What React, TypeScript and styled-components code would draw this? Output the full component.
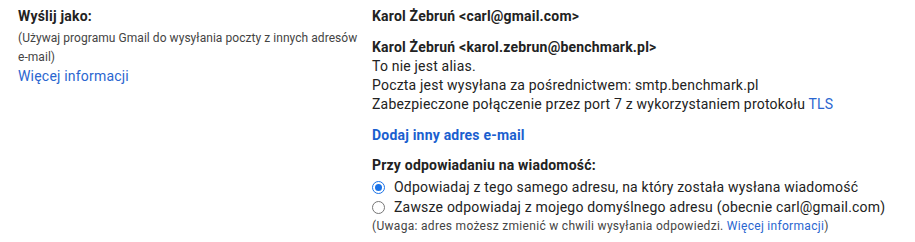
import React from "react";
import styled, { createGlobalStyle } from "styled-components";

const Global = createGlobalStyle`
  html, body { margin: 0; padding: 0; background: #fff; }
  body { font-family: Roboto, "Noto Sans", Arial, sans-serif; color: #222; }
`;

const Row = styled.div`
  display: grid;
  grid-template-columns: 354px 1fr;
  padding: 7px 0 0 18px;
  font-size: 14px;
  line-height: 19px;
  letter-spacing: 0.2px;
`;

const Left = styled.div`
  display: flex;
  flex-direction: column;
  white-space: nowrap;
`;

const Label = styled.div`
  font-weight: 700;
  color: #222;
  margin-bottom: 3px;
`;

const Small = styled.div`
  font-size: 12px;
  line-height: 19px;
  letter-spacing: 0.05px;
  color: #444;
`;

const Link = styled.a<{ $bold?: boolean }>`
  color: ${(p) => (p.$bold ? "#1a5fcf" : "#2a66d0")};
  font-weight: ${(p) => (p.$bold ? 700 : 400)};
  text-decoration: none;
  cursor: pointer;
`;

const LeftLink = styled(Link)`
  line-height: 18px;
`;

const Right = styled.div`
  display: flex;
  flex-direction: column;
`;

const Strong = styled.div<{ $gap?: number }>`
  font-weight: 700;
  margin-top: ${(p) => p.$gap ?? 0}px;
`;

const Line = styled.div``;

const Block = styled.div<{ $gap: number }>`
  margin-top: ${(p) => p.$gap}px;
`;

const RadioList = styled.div`
  display: flex;
  flex-direction: column;
  margin-top: 2px;
`;

const RadioRow = styled.label`
  display: flex;
  align-items: center;
  gap: 9px;
  height: 20px;
`;

const RadioCircle = styled.span<{ $on?: boolean }>`
  width: 13px;
  height: 13px;
  box-sizing: border-box;
  border-radius: 50%;
  border: 1px solid ${(p) => (p.$on ? "#1a73e8" : "#767676")};
  display: flex;
  align-items: center;
  justify-content: center;
  flex: none;
  &::after {
    content: "";
    width: 7px;
    height: 7px;
    border-radius: 50%;
    background: ${(p) => (p.$on ? "#1a73e8" : "transparent")};
  }
`;

const Note = styled.div`
  font-size: 12px;
  color: #444;
  line-height: 19px;
  letter-spacing: 0.3px;
  margin-top: 0px;
`;

export default function App() {
  return (
    <>
      <Global />
      <Row>
        <Left>
          <Label>Wyślij jako:</Label>
          <Small>(Używaj programu Gmail do wysyłania poczty z innych adresów</Small>
          <Small>e-mail)</Small>
          <LeftLink>Więcej informacji</LeftLink>
        </Left>
        <Right>
          <Strong>Karol Żebruń &lt;carl@gmail.com&gt;</Strong>
          <Strong $gap={12}>Karol Żebruń &lt;karol.zebrun@benchmark.pl&gt;</Strong>
          <Line>To nie jest alias.</Line>
          <Line>Poczta jest wysyłana za pośrednictwem: smtp.benchmark.pl</Line>
          <Line>
            Zabezpieczone połączenie przez port 7 z wykorzystaniem protokołu <Link>TLS</Link>
          </Line>
          <Block $gap={12}>
            <Link $bold>Dodaj inny adres e-mail</Link>
          </Block>
          <Strong $gap={11}>Przy odpowiadaniu na wiadomość:</Strong>
          <RadioList>
            <RadioRow>
              <RadioCircle $on />
              Odpowiadaj z tego samego adresu, na który została wysłana wiadomość
            </RadioRow>
            <RadioRow>
              <RadioCircle />
              Zawsze odpowiadaj z mojego domyślnego adresu (obecnie carl@gmail.com)
            </RadioRow>
          </RadioList>
          <Note>
            (Uwaga: adres możesz zmienić w chwili wysyłania odpowiedzi. <Link>Więcej informacji</Link>)
          </Note>
        </Right>
      </Row>
    </>
  );
}
